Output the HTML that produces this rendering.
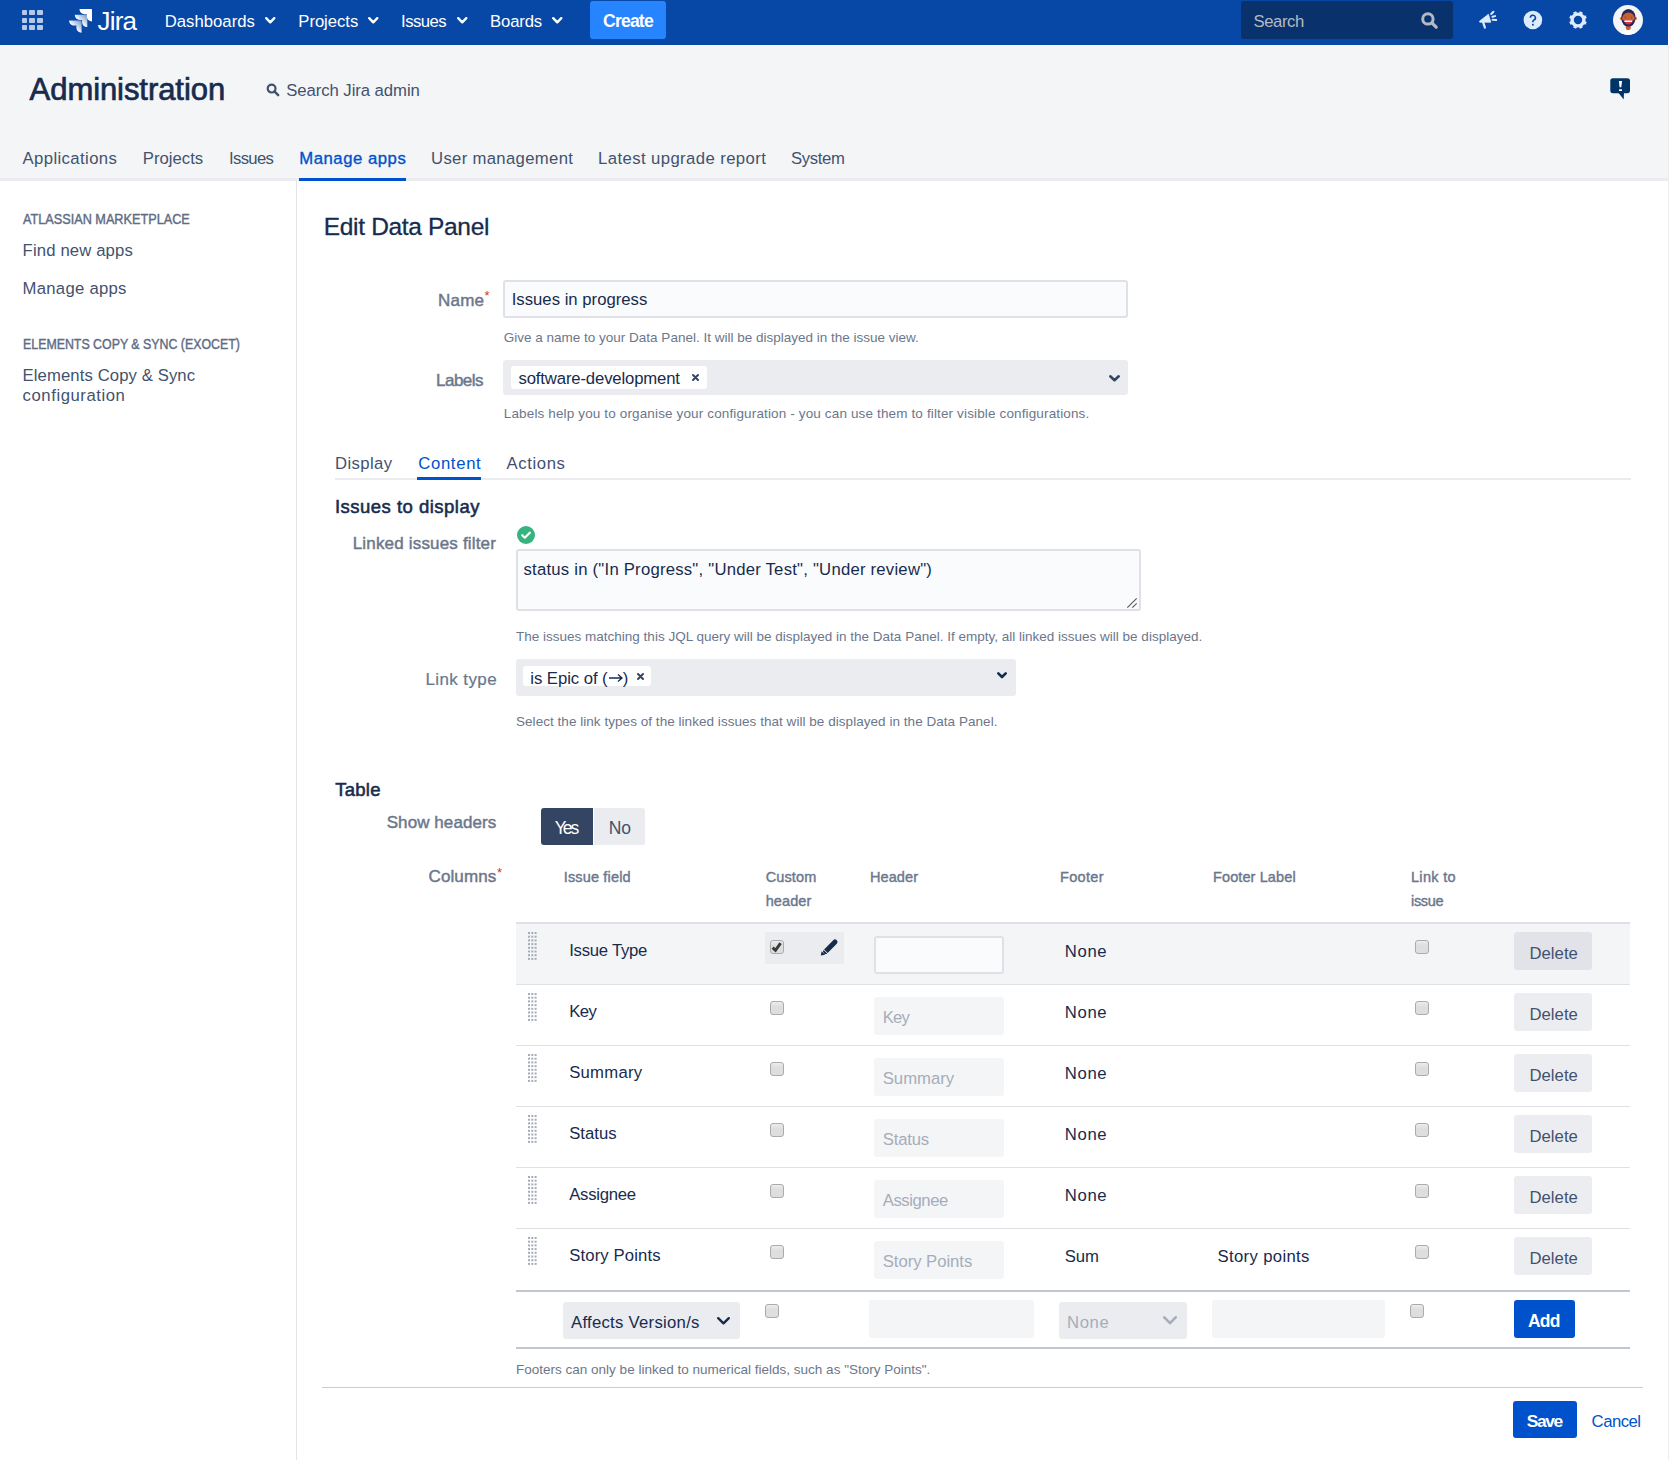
<!DOCTYPE html>
<html><head><meta charset="utf-8"><style>
html,body{margin:0;padding:0;width:1669px;height:1460px;overflow:hidden;background:#FFFFFF;}
body{position:relative;font-family:"Liberation Sans",sans-serif;}
body>div{position:absolute;}
.t{white-space:nowrap;}
svg{overflow:visible}
</style></head><body>
<div style="left:0px;top:0px;width:1668px;height:45px;background:#0747A6;"></div>
<div style="left:0px;top:45px;width:1668px;height:133px;background:#F4F5F7;"></div>
<div style="left:1668px;top:0px;width:1px;height:45px;background:#FFFFFF;"></div>
<div style="left:1668px;top:45px;width:1px;height:1415px;background:#EDEDED;"></div>
<div style="left:21.6px;top:10.0px;width:5.8px;height:5.2px;background:#B6C8EA;border-radius:1px"></div>
<div style="left:29.200000000000003px;top:10.0px;width:5.8px;height:5.2px;background:#B6C8EA;border-radius:1px"></div>
<div style="left:36.8px;top:10.0px;width:5.8px;height:5.2px;background:#B6C8EA;border-radius:1px"></div>
<div style="left:21.6px;top:17.6px;width:5.8px;height:5.2px;background:#B6C8EA;border-radius:1px"></div>
<div style="left:29.200000000000003px;top:17.6px;width:5.8px;height:5.2px;background:#B6C8EA;border-radius:1px"></div>
<div style="left:36.8px;top:17.6px;width:5.8px;height:5.2px;background:#B6C8EA;border-radius:1px"></div>
<div style="left:21.6px;top:25.2px;width:5.8px;height:5.2px;background:#B6C8EA;border-radius:1px"></div>
<div style="left:29.200000000000003px;top:25.2px;width:5.8px;height:5.2px;background:#B6C8EA;border-radius:1px"></div>
<div style="left:36.8px;top:25.2px;width:5.8px;height:5.2px;background:#B6C8EA;border-radius:1px"></div>
<svg style="position:absolute;left:66px;top:7px" width="28" height="28" viewBox="0 0 28 28">
<defs><linearGradient id="g1" x1="1" y1="0" x2="0" y2="1"><stop offset="0" stop-color="#fff" stop-opacity="0.4"/><stop offset="0.6" stop-color="#fff"/></linearGradient></defs>
<path d="M26 2H14.5c0 2.9 2.3 5.2 5.2 5.2h2.1v2c0 2.9 2.3 5.2 5.2 5.2V3c0-.6-.4-1-1-1z" fill="#fff" transform="translate(-1,0)"/>
<path d="M20.3 7.7H8.8c0 2.9 2.3 5.2 5.2 5.2h2.1v2c0 2.9 2.3 5.2 5.2 5.2V8.7c0-.6-.4-1-1-1z" fill="url(#g1)"/>
<path d="M14.6 13.4H3.1c0 2.9 2.3 5.2 5.2 5.2h2.1v2c0 2.9 2.3 5.2 5.2 5.2V14.4c0-.6-.4-1-1-1z" fill="url(#g1)"/>
</svg>
<div class="t" style="left:97.50px;top:8.00px;font-size:26px;line-height:26px;color:#FFFFFF;letter-spacing:-0.808px;">Jira</div>
<div class="t" style="left:164.70px;top:14.00px;font-size:16.7px;line-height:16.7px;color:#FFFFFF;letter-spacing:0.027px;">Dashboards</div>
<svg style="position:absolute;left:265px;top:17px" width="10.5" height="6.5" viewBox="0 0 10.5 6.5"><path d="M1.2 1.2L5.25 5.3L9.3 1.2" fill="none" stroke="#FFFFFF" stroke-width="2.4" stroke-linecap="round" stroke-linejoin="round"/></svg>
<div class="t" style="left:298.30px;top:14.00px;font-size:16.7px;line-height:16.7px;color:#FFFFFF;letter-spacing:-0.047px;">Projects</div>
<svg style="position:absolute;left:368.2px;top:17px" width="10.5" height="6.5" viewBox="0 0 10.5 6.5"><path d="M1.2 1.2L5.25 5.3L9.3 1.2" fill="none" stroke="#FFFFFF" stroke-width="2.4" stroke-linecap="round" stroke-linejoin="round"/></svg>
<div class="t" style="left:401.10px;top:14.00px;font-size:16.7px;line-height:16.7px;color:#FFFFFF;letter-spacing:-0.553px;">Issues</div>
<svg style="position:absolute;left:457.1px;top:17px" width="10.5" height="6.5" viewBox="0 0 10.5 6.5"><path d="M1.2 1.2L5.25 5.3L9.3 1.2" fill="none" stroke="#FFFFFF" stroke-width="2.4" stroke-linecap="round" stroke-linejoin="round"/></svg>
<div class="t" style="left:490.10px;top:14.00px;font-size:16.7px;line-height:16.7px;color:#FFFFFF;letter-spacing:-0.159px;">Boards</div>
<svg style="position:absolute;left:552px;top:17px" width="10.5" height="6.5" viewBox="0 0 10.5 6.5"><path d="M1.2 1.2L5.25 5.3L9.3 1.2" fill="none" stroke="#FFFFFF" stroke-width="2.4" stroke-linecap="round" stroke-linejoin="round"/></svg>
<div style="left:590px;top:1px;width:76px;height:38px;background:#2684FF;border-radius:3px"></div>
<div class="t" style="left:603.00px;top:13.00px;font-size:17.6px;line-height:17.6px;color:#FFFFFF;font-weight:700;letter-spacing:-0.816px;">Create</div>
<div style="left:1241px;top:1px;width:212px;height:38px;background:#09326C;border-radius:3px"></div>
<div class="t" style="left:1253.40px;top:14.00px;font-size:16.7px;line-height:16.7px;color:#B3BAC5;letter-spacing:-0.379px;">Search</div>
<svg style="position:absolute;left:1421px;top:12px" width="18" height="18" viewBox="0 0 18 18"><circle cx="6.9" cy="6.9" r="5.2" fill="none" stroke="#B3BAC5" stroke-width="3"/><path d="M10.8 10.8L15.2 15.2" stroke="#B3BAC5" stroke-width="3.2" stroke-linecap="round"/></svg>
<svg style="position:absolute;left:1478px;top:10px" width="20" height="20" viewBox="0 0 20 20"><path d="M1.4 11.3L10.4 4.3 12.8 12.2H1.8z" fill="#DEEBFF" stroke="#DEEBFF" stroke-width="0.8" stroke-linejoin="round"/><path d="M5.3 12.6L6.9 17.6" stroke="#DEEBFF" stroke-width="2.2" stroke-linecap="round"/><path d="M13.2 4L15.4 1.8M14.4 6.8L17.1 6.1M14.6 9.8L18.2 10.1" stroke="#DEEBFF" stroke-width="2" stroke-linecap="round"/></svg>
<svg style="position:absolute;left:1523px;top:10px" width="20" height="20" viewBox="0 0 20 20"><circle cx="9.9" cy="10" r="9.3" fill="#DEEBFF"/><path d="M7.4 7.8a2.5 2.5 0 1 1 3.4 2.3c-.6.3-.9.7-.9 1.3v.9" fill="none" stroke="#0747A6" stroke-width="1.6"/><circle cx="9.9" cy="14.8" r="1" fill="#0747A6"/></svg>
<svg style="position:absolute;left:1568px;top:10px" width="20" height="20" viewBox="0 0 20 20" fill="#DEEBFF"><path d="M8.45 1.2H11.55L11.8 4.5H8.2z" transform="rotate(22.5 10 10)"/><path d="M8.45 1.2H11.55L11.8 4.5H8.2z" transform="rotate(67.5 10 10)"/><path d="M8.45 1.2H11.55L11.8 4.5H8.2z" transform="rotate(112.5 10 10)"/><path d="M8.45 1.2H11.55L11.8 4.5H8.2z" transform="rotate(157.5 10 10)"/><path d="M8.45 1.2H11.55L11.8 4.5H8.2z" transform="rotate(202.5 10 10)"/><path d="M8.45 1.2H11.55L11.8 4.5H8.2z" transform="rotate(247.5 10 10)"/><path d="M8.45 1.2H11.55L11.8 4.5H8.2z" transform="rotate(292.5 10 10)"/><path d="M8.45 1.2H11.55L11.8 4.5H8.2z" transform="rotate(337.5 10 10)"/><circle cx="10" cy="10" r="5.9" fill="none" stroke="#DEEBFF" stroke-width="3.4"/></svg>
<svg style="position:absolute;left:1612px;top:4px" width="32" height="32" viewBox="0 0 32 32">
<defs><clipPath id="av"><circle cx="16" cy="16" r="15"/></clipPath></defs>
<circle cx="16" cy="16" r="15" fill="#F4F5F7"/>
<g clip-path="url(#av)">
<ellipse cx="16.4" cy="32" rx="9" ry="6" fill="#FFFFFF"/>
<rect x="13.8" y="20" width="5" height="6" rx="2" fill="#C8602F"/>
<circle cx="9.2" cy="14.6" r="1.3" fill="#C8602F"/>
<circle cx="23.6" cy="14.6" r="1.3" fill="#C8602F"/>
<ellipse cx="16.4" cy="13.6" rx="7.2" ry="8.6" fill="#25285A"/>
<ellipse cx="16.4" cy="15.3" rx="6.4" ry="6.9" fill="#C8602F"/>
<path d="M9.8 14.8Q10.2 22.6 16.4 22.6Q22.6 22.6 23 14.8Q22.2 17.2 16.4 17.2Q10.6 17.2 9.8 14.8z" fill="#25285A"/>
<path d="M12.3 16.6H20.4Q20 20.5 16.4 20.5Q12.8 20.5 12.3 16.6z" fill="#D6304A"/>
<path d="M12.3 16.4H20.4L20.2 18H12.5z" fill="#FFFFFF"/>
<rect x="12.6" y="12.6" width="1.2" height="1.8" rx=".5" fill="#9C4A2A"/>
<rect x="19" y="12.6" width="1.2" height="1.8" rx=".5" fill="#9C4A2A"/>
</g>
</svg>
<div class="t" style="left:29.60px;top:74.00px;font-size:31px;line-height:31px;color:#172B4D;letter-spacing:-0.068px;-webkit-text-stroke:0.7px #172B4D;">Administration</div>
<svg style="position:absolute;left:266px;top:83px" width="14" height="14" viewBox="0 0 14 14"><circle cx="5.6" cy="5.6" r="3.9" fill="none" stroke="#42526E" stroke-width="2.2"/><path d="M8.6 8.6L12.2 12.2" stroke="#42526E" stroke-width="2.4" stroke-linecap="round"/></svg>
<div class="t" style="left:286.20px;top:83.00px;font-size:16.7px;line-height:16.7px;color:#42526E;letter-spacing:-0.050px;">Search Jira admin</div>
<svg style="position:absolute;left:1609px;top:78px" width="22" height="22" viewBox="0 0 22 22"><rect x="1.3" y="0.2" width="19.7" height="15" rx="2.6" fill="#003366"/><path d="M9.2 14.5L15 14.5 14.7 21.6z" fill="#003366"/><path d="M9.8 2.9H13.1L12.3 9.2H10.6z" fill="#fff"/><rect x="10" y="11.2" width="3" height="1.9" rx=".4" fill="#fff"/></svg>
<div class="t" style="left:22.50px;top:151.00px;font-size:16.7px;line-height:16.7px;color:#42526E;letter-spacing:0.395px;">Applications</div>
<div class="t" style="left:142.80px;top:151.00px;font-size:16.7px;line-height:16.7px;color:#42526E;letter-spacing:0.010px;">Projects</div>
<div class="t" style="left:229.00px;top:151.00px;font-size:16.7px;line-height:16.7px;color:#42526E;letter-spacing:-0.653px;">Issues</div>
<div class="t" style="left:299.30px;top:151.00px;font-size:16.7px;line-height:16.7px;color:#0052CC;letter-spacing:0.530px;-webkit-text-stroke:0.35px #0052CC;">Manage apps</div>
<div class="t" style="left:431.00px;top:151.00px;font-size:16.7px;line-height:16.7px;color:#42526E;letter-spacing:0.329px;">User management</div>
<div class="t" style="left:598.00px;top:151.00px;font-size:16.7px;line-height:16.7px;color:#42526E;letter-spacing:0.415px;">Latest upgrade report</div>
<div class="t" style="left:791.00px;top:151.00px;font-size:16.7px;line-height:16.7px;color:#42526E;letter-spacing:-0.339px;">System</div>
<div style="left:0px;top:178px;width:1668px;height:3px;background:#EBECF0;"></div>
<div style="left:299px;top:178px;width:107px;height:3px;background:#0052CC;"></div>
<div style="left:296px;top:181px;width:1px;height:1279px;background:#E4E5EA;"></div>
<div class="t" style="left:22.60px;top:213.00px;font-size:13.8px;line-height:13.8px;color:#5E6C84;transform:scaleX(0.9190);transform-origin:0.00px 0;-webkit-text-stroke:0.4px #5E6C84;">ATLASSIAN MARKETPLACE</div>
<div class="t" style="left:22.60px;top:243.00px;font-size:16.7px;line-height:16.7px;color:#42526E;letter-spacing:0.139px;">Find new apps</div>
<div class="t" style="left:22.60px;top:281.00px;font-size:16.7px;line-height:16.7px;color:#42526E;letter-spacing:0.270px;">Manage apps</div>
<div class="t" style="left:22.60px;top:338.00px;font-size:13.8px;line-height:13.8px;color:#5E6C84;transform:scaleX(0.8965);transform-origin:0.00px 0;-webkit-text-stroke:0.4px #5E6C84;">ELEMENTS COPY &amp; SYNC (EXOCET)</div>
<div class="t" style="left:22.60px;top:368.00px;font-size:16.7px;line-height:16.7px;color:#42526E;letter-spacing:0.095px;">Elements Copy &amp; Sync</div>
<div class="t" style="left:22.60px;top:388.00px;font-size:16.7px;line-height:16.7px;color:#42526E;letter-spacing:0.563px;">configuration</div>
<div class="t" style="left:323.80px;top:215.00px;font-size:24.5px;line-height:24.5px;color:#172B4D;letter-spacing:-0.334px;-webkit-text-stroke:0.3px #172B4D;">Edit Data Panel</div>
<div class="t" style="left:438.00px;top:292.00px;font-size:17px;line-height:17px;color:#6B778C;letter-spacing:0.234px;-webkit-text-stroke:0.45px #6B778C;">Name</div>
<div class="t" style="left:484.5px;top:289px;font-size:13px;line-height:13px;color:#DE350B">*</div>
<div style="left:503px;top:280px;width:625px;height:38px;background:#FAFBFC;border:2px solid #DFE1E6;border-radius:3px;box-sizing:border-box"></div>
<div class="t" style="left:511.70px;top:292.00px;font-size:16.7px;line-height:16.7px;color:#172B4D;letter-spacing:0.011px;">Issues in progress</div>
<div class="t" style="left:503.80px;top:331.00px;font-size:13.5px;line-height:13.5px;color:#6B778C;letter-spacing:0.000px;">Give a name to your Data Panel. It will be displayed in the issue view.</div>
<div class="t" style="left:436.00px;top:372.00px;font-size:17px;line-height:17px;color:#6B778C;letter-spacing:-0.512px;-webkit-text-stroke:0.45px #6B778C;">Labels</div>
<div style="left:503px;top:360px;width:625px;height:35px;background:#EBECF0;border-radius:3px"></div>
<div style="left:511px;top:366px;width:196px;height:23px;background:#FFFFFF;border-radius:3px"></div>
<div class="t" style="left:518.50px;top:371.00px;font-size:16.7px;line-height:16.7px;color:#172B4D;letter-spacing:-0.141px;">software-development</div>
<svg style="position:absolute;left:691.5px;top:374.3px" width="7" height="7" viewBox="0 0 7 7"><path d="M1.0 1.0L6.0 6.0M6.0 1.0L1.0 6.0" stroke="#344563" stroke-width="2" stroke-linecap="round"/></svg>
<svg style="position:absolute;left:1109px;top:375px" width="11" height="6.5" viewBox="0 0 11 6.5"><path d="M1.3 1.3L5.5 5.2L9.7 1.3" fill="none" stroke="#344563" stroke-width="2.6" stroke-linecap="round" stroke-linejoin="round"/></svg>
<div class="t" style="left:503.80px;top:407.00px;font-size:13.5px;line-height:13.5px;color:#6B778C;letter-spacing:0.139px;">Labels help you to organise your configuration - you can use them to filter visible configurations.</div>
<div class="t" style="left:335.10px;top:456.00px;font-size:16.7px;line-height:16.7px;color:#42526E;letter-spacing:0.371px;">Display</div>
<div class="t" style="left:418.20px;top:456.00px;font-size:16.7px;line-height:16.7px;color:#0052CC;letter-spacing:0.685px;">Content</div>
<div class="t" style="left:506.50px;top:456.00px;font-size:16.7px;line-height:16.7px;color:#42526E;letter-spacing:0.621px;">Actions</div>
<div style="left:335px;top:478px;width:1296px;height:2px;background:#EBECF0;"></div>
<div style="left:417px;top:477px;width:64px;height:3px;background:#0052CC;"></div>
<div class="t" style="left:335.00px;top:498.00px;font-size:18.5px;line-height:18.5px;color:#172B4D;letter-spacing:0.481px;-webkit-text-stroke:0.55px #172B4D;">Issues to display</div>
<div class="t" style="left:352.70px;top:535.00px;font-size:17px;line-height:17px;color:#6B778C;letter-spacing:0.178px;-webkit-text-stroke:0.45px #6B778C;">Linked issues filter</div>
<svg style="position:absolute;left:517px;top:526px" width="18" height="18" viewBox="0 0 18 18"><circle cx="9" cy="9" r="9" fill="#36B37E"/><path d="M5.2 9.2l2.6 2.5 5-5" fill="none" stroke="#fff" stroke-width="2.2" stroke-linecap="round" stroke-linejoin="round"/></svg>
<div style="left:516px;top:549px;width:625px;height:62px;background:#FAFBFC;border:2px solid #DFE1E6;border-radius:3px;box-sizing:border-box"></div>
<svg style="position:absolute;left:1124px;top:594px" width="16" height="16" viewBox="0 0 16 16"><path d="M3.3 13.7L12.7 4.3M8.3 13.7L12.7 9.3" stroke="#555" stroke-width="1.05"/></svg>
<div class="t" style="left:523.50px;top:562.00px;font-size:16.7px;line-height:16.7px;color:#172B4D;letter-spacing:0.229px;">status in (&quot;In Progress&quot;, &quot;Under Test&quot;, &quot;Under review&quot;)</div>
<div class="t" style="left:516.00px;top:630.00px;font-size:13.5px;line-height:13.5px;color:#6B778C;letter-spacing:0.003px;">The issues matching this JQL query will be displayed in the Data Panel. If empty, all linked issues will be displayed.</div>
<div class="t" style="left:425.50px;top:671.00px;font-size:17px;line-height:17px;color:#6B778C;letter-spacing:0.382px;-webkit-text-stroke:0.2px #6B778C;">Link type</div>
<div style="left:516px;top:659px;width:500px;height:37px;background:#EBECF0;border-radius:3px"></div>
<div style="left:523px;top:666px;width:128px;height:20px;background:#FFFFFF;border-radius:3px"></div>
<div class="t" style="left:530.30px;top:671.00px;font-size:16.7px;line-height:16.7px;color:#172B4D;letter-spacing:-0.050px;">is Epic of (</div>
<svg style="position:absolute;left:608px;top:673px" width="16" height="10" viewBox="0 0 16 10"><path d="M1 5H14M10 1.5L14 5 10 8.5" fill="none" stroke="#172B4D" stroke-width="1.3"/></svg>
<div class="t" style="left:622.80px;top:671.00px;font-size:16.7px;line-height:16.7px;color:#172B4D;">)</div>
<svg style="position:absolute;left:636.8px;top:672.5px" width="7" height="7" viewBox="0 0 7 7"><path d="M1.0 1.0L6.0 6.0M6.0 1.0L1.0 6.0" stroke="#344563" stroke-width="2" stroke-linecap="round"/></svg>
<svg style="position:absolute;left:997.4px;top:672.4px" width="10" height="6.3" viewBox="0 0 10 6.3"><path d="M1.3 1.3L5.0 5.0L8.7 1.3" fill="none" stroke="#172B4D" stroke-width="2.6" stroke-linecap="round" stroke-linejoin="round"/></svg>
<div class="t" style="left:516.00px;top:715.00px;font-size:13.5px;line-height:13.5px;color:#6B778C;letter-spacing:0.041px;">Select the link types of the linked issues that will be displayed in the Data Panel.</div>
<div class="t" style="left:335.20px;top:781.00px;font-size:18.5px;line-height:18.5px;color:#172B4D;letter-spacing:0.259px;-webkit-text-stroke:0.55px #172B4D;">Table</div>
<div class="t" style="left:386.70px;top:814.00px;font-size:17px;line-height:17px;color:#6B778C;letter-spacing:0.080px;-webkit-text-stroke:0.45px #6B778C;">Show headers</div>
<div style="left:541px;top:808px;width:104px;height:37px;background:#EBECF0;border-radius:3px"></div>
<div style="left:541px;top:808px;width:52px;height:37px;background:#344563;border-radius:3px 0 0 3px"></div>
<div style="left:593px;top:808px;width:1px;height:37px;background:#FFFFFF;"></div>
<div class="t" style="left:554.80px;top:820.00px;font-size:17.5px;line-height:17.5px;color:#FFFFFF;letter-spacing:-2.084px;">Yes</div>
<div class="t" style="left:608.80px;top:820.00px;font-size:17.5px;line-height:17.5px;color:#42526E;letter-spacing:-0.156px;">No</div>
<div class="t" style="left:428.50px;top:868.00px;font-size:17px;line-height:17px;color:#6B778C;letter-spacing:0.114px;-webkit-text-stroke:0.45px #6B778C;">Columns</div>
<div class="t" style="left:497px;top:866px;font-size:13px;line-height:13px;color:#DE350B">*</div>
<div class="t" style="left:563.70px;top:870.00px;font-size:14.5px;line-height:14.5px;color:#6B778C;letter-spacing:0.161px;-webkit-text-stroke:0.4px #6B778C;">Issue field</div>
<div class="t" style="left:765.70px;top:870.00px;font-size:14.5px;line-height:14.5px;color:#6B778C;letter-spacing:0.130px;-webkit-text-stroke:0.4px #6B778C;">Custom</div>
<div class="t" style="left:765.70px;top:894.00px;font-size:14.5px;line-height:14.5px;color:#6B778C;letter-spacing:0.087px;-webkit-text-stroke:0.4px #6B778C;">header</div>
<div class="t" style="left:870.00px;top:870.00px;font-size:14.5px;line-height:14.5px;color:#6B778C;letter-spacing:0.088px;-webkit-text-stroke:0.4px #6B778C;">Header</div>
<div class="t" style="left:1060.00px;top:870.00px;font-size:14.5px;line-height:14.5px;color:#6B778C;letter-spacing:0.339px;-webkit-text-stroke:0.4px #6B778C;">Footer</div>
<div class="t" style="left:1213.00px;top:870.00px;font-size:14.5px;line-height:14.5px;color:#6B778C;letter-spacing:0.108px;-webkit-text-stroke:0.4px #6B778C;">Footer Label</div>
<div class="t" style="left:1411.00px;top:870.00px;font-size:14.5px;line-height:14.5px;color:#6B778C;letter-spacing:0.310px;-webkit-text-stroke:0.4px #6B778C;">Link to</div>
<div class="t" style="left:1411.00px;top:894.00px;font-size:14.5px;line-height:14.5px;color:#6B778C;letter-spacing:-0.314px;-webkit-text-stroke:0.4px #6B778C;">issue</div>
<div style="left:516px;top:922px;width:1114px;height:2px;background:#DFE1E6;"></div>
<div style="left:516px;top:924px;width:1114px;height:60px;background:#F4F5F7;"></div>
<svg style="position:absolute;left:528px;top:932px" width="10" height="30" viewBox="0 0 10 30"><rect x="0.0" y="0.0" width="2" height="2" fill="#A5ADBA"/><rect x="3.3" y="0.0" width="2" height="2" fill="#A5ADBA"/><rect x="6.6" y="0.0" width="2" height="2" fill="#A5ADBA"/><rect x="0.0" y="3.7" width="2" height="2" fill="#A5ADBA"/><rect x="3.3" y="3.7" width="2" height="2" fill="#A5ADBA"/><rect x="6.6" y="3.7" width="2" height="2" fill="#A5ADBA"/><rect x="0.0" y="7.4" width="2" height="2" fill="#A5ADBA"/><rect x="3.3" y="7.4" width="2" height="2" fill="#A5ADBA"/><rect x="6.6" y="7.4" width="2" height="2" fill="#A5ADBA"/><rect x="0.0" y="11.100000000000001" width="2" height="2" fill="#A5ADBA"/><rect x="3.3" y="11.100000000000001" width="2" height="2" fill="#A5ADBA"/><rect x="6.6" y="11.100000000000001" width="2" height="2" fill="#A5ADBA"/><rect x="0.0" y="14.8" width="2" height="2" fill="#A5ADBA"/><rect x="3.3" y="14.8" width="2" height="2" fill="#A5ADBA"/><rect x="6.6" y="14.8" width="2" height="2" fill="#A5ADBA"/><rect x="0.0" y="18.5" width="2" height="2" fill="#A5ADBA"/><rect x="3.3" y="18.5" width="2" height="2" fill="#A5ADBA"/><rect x="6.6" y="18.5" width="2" height="2" fill="#A5ADBA"/><rect x="0.0" y="22.200000000000003" width="2" height="2" fill="#A5ADBA"/><rect x="3.3" y="22.200000000000003" width="2" height="2" fill="#A5ADBA"/><rect x="6.6" y="22.200000000000003" width="2" height="2" fill="#A5ADBA"/><rect x="0.0" y="25.900000000000002" width="2" height="2" fill="#A5ADBA"/><rect x="3.3" y="25.900000000000002" width="2" height="2" fill="#A5ADBA"/><rect x="6.6" y="25.900000000000002" width="2" height="2" fill="#A5ADBA"/></svg>
<div class="t" style="left:569.20px;top:943.00px;font-size:16.7px;line-height:16.7px;color:#172B4D;letter-spacing:-0.250px;">Issue Type</div>
<div style="left:765px;top:932px;width:79px;height:32px;background:#EBECF0;"></div>
<svg style="position:absolute;left:770px;top:940px" width="14" height="14" viewBox="0 0 14 14"><defs><linearGradient id="cbg" x1="0" y1="0" x2="0" y2="1"><stop offset="0" stop-color="#EEEEEE"/><stop offset="0.4" stop-color="#DEDEDE"/></linearGradient></defs><rect x="0.5" y="0.5" width="13" height="13" rx="2.5" fill="url(#cbg)" stroke="#ABABAB"/><path d="M2.6 7.6L5.5 10.4 10.6 3.2" fill="none" stroke="#3A3A3A" stroke-width="2.9" stroke-linejoin="miter"/></svg>
<svg style="position:absolute;left:820px;top:939px" width="18" height="18" viewBox="0 0 18 18"><path d="M5.6 12.4L15 3" stroke="#172B4D" stroke-width="5" stroke-linecap="round"/><path d="M2.6 9.4l6 6" stroke="#EBECF0" stroke-width="1"/><path d="M0.8 16.6L1.6 12.2 5.2 15.8z" fill="#172B4D"/></svg>
<div style="left:874px;top:936px;width:130px;height:38px;background:#FAFBFC;border:2px solid #DFE1E6;border-radius:3px;box-sizing:border-box"></div>
<div class="t" style="left:1064.80px;top:944.00px;font-size:16.7px;line-height:16.7px;color:#172B4D;letter-spacing:0.629px;">None</div>
<svg style="position:absolute;left:1415px;top:940px" width="14" height="14" viewBox="0 0 14 14"><defs><linearGradient id="cbg" x1="0" y1="0" x2="0" y2="1"><stop offset="0" stop-color="#EEEEEE"/><stop offset="0.4" stop-color="#DEDEDE"/></linearGradient></defs><rect x="0.5" y="0.5" width="13" height="13" rx="2.5" fill="url(#cbg)" stroke="#ABABAB"/></svg>
<div style="left:1514px;top:932px;width:78px;height:38px;background:rgba(9,30,66,0.08);border-radius:3px"></div>
<div class="t" style="left:1529.40px;top:946.00px;font-size:16.7px;line-height:16.7px;color:#42526E;letter-spacing:0.047px;">Delete</div>
<div style="left:516px;top:984px;width:1114px;height:1px;background:#DFE1E6;"></div>
<svg style="position:absolute;left:528px;top:993px" width="10" height="30" viewBox="0 0 10 30"><rect x="0.0" y="0.0" width="2" height="2" fill="#A5ADBA"/><rect x="3.3" y="0.0" width="2" height="2" fill="#A5ADBA"/><rect x="6.6" y="0.0" width="2" height="2" fill="#A5ADBA"/><rect x="0.0" y="3.7" width="2" height="2" fill="#A5ADBA"/><rect x="3.3" y="3.7" width="2" height="2" fill="#A5ADBA"/><rect x="6.6" y="3.7" width="2" height="2" fill="#A5ADBA"/><rect x="0.0" y="7.4" width="2" height="2" fill="#A5ADBA"/><rect x="3.3" y="7.4" width="2" height="2" fill="#A5ADBA"/><rect x="6.6" y="7.4" width="2" height="2" fill="#A5ADBA"/><rect x="0.0" y="11.100000000000001" width="2" height="2" fill="#A5ADBA"/><rect x="3.3" y="11.100000000000001" width="2" height="2" fill="#A5ADBA"/><rect x="6.6" y="11.100000000000001" width="2" height="2" fill="#A5ADBA"/><rect x="0.0" y="14.8" width="2" height="2" fill="#A5ADBA"/><rect x="3.3" y="14.8" width="2" height="2" fill="#A5ADBA"/><rect x="6.6" y="14.8" width="2" height="2" fill="#A5ADBA"/><rect x="0.0" y="18.5" width="2" height="2" fill="#A5ADBA"/><rect x="3.3" y="18.5" width="2" height="2" fill="#A5ADBA"/><rect x="6.6" y="18.5" width="2" height="2" fill="#A5ADBA"/><rect x="0.0" y="22.200000000000003" width="2" height="2" fill="#A5ADBA"/><rect x="3.3" y="22.200000000000003" width="2" height="2" fill="#A5ADBA"/><rect x="6.6" y="22.200000000000003" width="2" height="2" fill="#A5ADBA"/><rect x="0.0" y="25.900000000000002" width="2" height="2" fill="#A5ADBA"/><rect x="3.3" y="25.900000000000002" width="2" height="2" fill="#A5ADBA"/><rect x="6.6" y="25.900000000000002" width="2" height="2" fill="#A5ADBA"/></svg>
<div class="t" style="left:569.20px;top:1004.00px;font-size:16.7px;line-height:16.7px;color:#172B4D;letter-spacing:-0.583px;">Key</div>
<svg style="position:absolute;left:770px;top:1001px" width="14" height="14" viewBox="0 0 14 14"><defs><linearGradient id="cbg" x1="0" y1="0" x2="0" y2="1"><stop offset="0" stop-color="#EEEEEE"/><stop offset="0.4" stop-color="#DEDEDE"/></linearGradient></defs><rect x="0.5" y="0.5" width="13" height="13" rx="2.5" fill="url(#cbg)" stroke="#ABABAB"/></svg>
<div style="left:874px;top:997px;width:130px;height:38px;background:#F4F5F7;border-radius:3px"></div>
<div class="t" style="left:882.70px;top:1010.00px;font-size:16.7px;line-height:16.7px;color:#A5ADBA;letter-spacing:-0.859px;">Key</div>
<div class="t" style="left:1064.80px;top:1005.00px;font-size:16.7px;line-height:16.7px;color:#172B4D;letter-spacing:0.629px;">None</div>
<svg style="position:absolute;left:1415px;top:1001px" width="14" height="14" viewBox="0 0 14 14"><defs><linearGradient id="cbg" x1="0" y1="0" x2="0" y2="1"><stop offset="0" stop-color="#EEEEEE"/><stop offset="0.4" stop-color="#DEDEDE"/></linearGradient></defs><rect x="0.5" y="0.5" width="13" height="13" rx="2.5" fill="url(#cbg)" stroke="#ABABAB"/></svg>
<div style="left:1514px;top:993px;width:78px;height:38px;background:rgba(9,30,66,0.08);border-radius:3px"></div>
<div class="t" style="left:1529.40px;top:1007.00px;font-size:16.7px;line-height:16.7px;color:#42526E;letter-spacing:0.047px;">Delete</div>
<div style="left:516px;top:1045px;width:1114px;height:1px;background:#DFE1E6;"></div>
<svg style="position:absolute;left:528px;top:1054px" width="10" height="30" viewBox="0 0 10 30"><rect x="0.0" y="0.0" width="2" height="2" fill="#A5ADBA"/><rect x="3.3" y="0.0" width="2" height="2" fill="#A5ADBA"/><rect x="6.6" y="0.0" width="2" height="2" fill="#A5ADBA"/><rect x="0.0" y="3.7" width="2" height="2" fill="#A5ADBA"/><rect x="3.3" y="3.7" width="2" height="2" fill="#A5ADBA"/><rect x="6.6" y="3.7" width="2" height="2" fill="#A5ADBA"/><rect x="0.0" y="7.4" width="2" height="2" fill="#A5ADBA"/><rect x="3.3" y="7.4" width="2" height="2" fill="#A5ADBA"/><rect x="6.6" y="7.4" width="2" height="2" fill="#A5ADBA"/><rect x="0.0" y="11.100000000000001" width="2" height="2" fill="#A5ADBA"/><rect x="3.3" y="11.100000000000001" width="2" height="2" fill="#A5ADBA"/><rect x="6.6" y="11.100000000000001" width="2" height="2" fill="#A5ADBA"/><rect x="0.0" y="14.8" width="2" height="2" fill="#A5ADBA"/><rect x="3.3" y="14.8" width="2" height="2" fill="#A5ADBA"/><rect x="6.6" y="14.8" width="2" height="2" fill="#A5ADBA"/><rect x="0.0" y="18.5" width="2" height="2" fill="#A5ADBA"/><rect x="3.3" y="18.5" width="2" height="2" fill="#A5ADBA"/><rect x="6.6" y="18.5" width="2" height="2" fill="#A5ADBA"/><rect x="0.0" y="22.200000000000003" width="2" height="2" fill="#A5ADBA"/><rect x="3.3" y="22.200000000000003" width="2" height="2" fill="#A5ADBA"/><rect x="6.6" y="22.200000000000003" width="2" height="2" fill="#A5ADBA"/><rect x="0.0" y="25.900000000000002" width="2" height="2" fill="#A5ADBA"/><rect x="3.3" y="25.900000000000002" width="2" height="2" fill="#A5ADBA"/><rect x="6.6" y="25.900000000000002" width="2" height="2" fill="#A5ADBA"/></svg>
<div class="t" style="left:569.20px;top:1065.00px;font-size:16.7px;line-height:16.7px;color:#172B4D;letter-spacing:0.261px;">Summary</div>
<svg style="position:absolute;left:770px;top:1062px" width="14" height="14" viewBox="0 0 14 14"><defs><linearGradient id="cbg" x1="0" y1="0" x2="0" y2="1"><stop offset="0" stop-color="#EEEEEE"/><stop offset="0.4" stop-color="#DEDEDE"/></linearGradient></defs><rect x="0.5" y="0.5" width="13" height="13" rx="2.5" fill="url(#cbg)" stroke="#ABABAB"/></svg>
<div style="left:874px;top:1058px;width:130px;height:38px;background:#F4F5F7;border-radius:3px"></div>
<div class="t" style="left:882.70px;top:1071.00px;font-size:16.7px;line-height:16.7px;color:#A5ADBA;letter-spacing:0.018px;">Summary</div>
<div class="t" style="left:1064.80px;top:1066.00px;font-size:16.7px;line-height:16.7px;color:#172B4D;letter-spacing:0.629px;">None</div>
<svg style="position:absolute;left:1415px;top:1062px" width="14" height="14" viewBox="0 0 14 14"><defs><linearGradient id="cbg" x1="0" y1="0" x2="0" y2="1"><stop offset="0" stop-color="#EEEEEE"/><stop offset="0.4" stop-color="#DEDEDE"/></linearGradient></defs><rect x="0.5" y="0.5" width="13" height="13" rx="2.5" fill="url(#cbg)" stroke="#ABABAB"/></svg>
<div style="left:1514px;top:1054px;width:78px;height:38px;background:rgba(9,30,66,0.08);border-radius:3px"></div>
<div class="t" style="left:1529.40px;top:1068.00px;font-size:16.7px;line-height:16.7px;color:#42526E;letter-spacing:0.047px;">Delete</div>
<div style="left:516px;top:1106px;width:1114px;height:1px;background:#DFE1E6;"></div>
<svg style="position:absolute;left:528px;top:1115px" width="10" height="30" viewBox="0 0 10 30"><rect x="0.0" y="0.0" width="2" height="2" fill="#A5ADBA"/><rect x="3.3" y="0.0" width="2" height="2" fill="#A5ADBA"/><rect x="6.6" y="0.0" width="2" height="2" fill="#A5ADBA"/><rect x="0.0" y="3.7" width="2" height="2" fill="#A5ADBA"/><rect x="3.3" y="3.7" width="2" height="2" fill="#A5ADBA"/><rect x="6.6" y="3.7" width="2" height="2" fill="#A5ADBA"/><rect x="0.0" y="7.4" width="2" height="2" fill="#A5ADBA"/><rect x="3.3" y="7.4" width="2" height="2" fill="#A5ADBA"/><rect x="6.6" y="7.4" width="2" height="2" fill="#A5ADBA"/><rect x="0.0" y="11.100000000000001" width="2" height="2" fill="#A5ADBA"/><rect x="3.3" y="11.100000000000001" width="2" height="2" fill="#A5ADBA"/><rect x="6.6" y="11.100000000000001" width="2" height="2" fill="#A5ADBA"/><rect x="0.0" y="14.8" width="2" height="2" fill="#A5ADBA"/><rect x="3.3" y="14.8" width="2" height="2" fill="#A5ADBA"/><rect x="6.6" y="14.8" width="2" height="2" fill="#A5ADBA"/><rect x="0.0" y="18.5" width="2" height="2" fill="#A5ADBA"/><rect x="3.3" y="18.5" width="2" height="2" fill="#A5ADBA"/><rect x="6.6" y="18.5" width="2" height="2" fill="#A5ADBA"/><rect x="0.0" y="22.200000000000003" width="2" height="2" fill="#A5ADBA"/><rect x="3.3" y="22.200000000000003" width="2" height="2" fill="#A5ADBA"/><rect x="6.6" y="22.200000000000003" width="2" height="2" fill="#A5ADBA"/><rect x="0.0" y="25.900000000000002" width="2" height="2" fill="#A5ADBA"/><rect x="3.3" y="25.900000000000002" width="2" height="2" fill="#A5ADBA"/><rect x="6.6" y="25.900000000000002" width="2" height="2" fill="#A5ADBA"/></svg>
<div class="t" style="left:569.20px;top:1126.00px;font-size:16.7px;line-height:16.7px;color:#172B4D;letter-spacing:0.031px;">Status</div>
<svg style="position:absolute;left:770px;top:1123px" width="14" height="14" viewBox="0 0 14 14"><defs><linearGradient id="cbg" x1="0" y1="0" x2="0" y2="1"><stop offset="0" stop-color="#EEEEEE"/><stop offset="0.4" stop-color="#DEDEDE"/></linearGradient></defs><rect x="0.5" y="0.5" width="13" height="13" rx="2.5" fill="url(#cbg)" stroke="#ABABAB"/></svg>
<div style="left:874px;top:1119px;width:130px;height:38px;background:#F4F5F7;border-radius:3px"></div>
<div class="t" style="left:882.70px;top:1132.00px;font-size:16.7px;line-height:16.7px;color:#A5ADBA;letter-spacing:-0.159px;">Status</div>
<div class="t" style="left:1064.80px;top:1127.00px;font-size:16.7px;line-height:16.7px;color:#172B4D;letter-spacing:0.629px;">None</div>
<svg style="position:absolute;left:1415px;top:1123px" width="14" height="14" viewBox="0 0 14 14"><defs><linearGradient id="cbg" x1="0" y1="0" x2="0" y2="1"><stop offset="0" stop-color="#EEEEEE"/><stop offset="0.4" stop-color="#DEDEDE"/></linearGradient></defs><rect x="0.5" y="0.5" width="13" height="13" rx="2.5" fill="url(#cbg)" stroke="#ABABAB"/></svg>
<div style="left:1514px;top:1115px;width:78px;height:38px;background:rgba(9,30,66,0.08);border-radius:3px"></div>
<div class="t" style="left:1529.40px;top:1129.00px;font-size:16.7px;line-height:16.7px;color:#42526E;letter-spacing:0.047px;">Delete</div>
<div style="left:516px;top:1167px;width:1114px;height:1px;background:#DFE1E6;"></div>
<svg style="position:absolute;left:528px;top:1176px" width="10" height="30" viewBox="0 0 10 30"><rect x="0.0" y="0.0" width="2" height="2" fill="#A5ADBA"/><rect x="3.3" y="0.0" width="2" height="2" fill="#A5ADBA"/><rect x="6.6" y="0.0" width="2" height="2" fill="#A5ADBA"/><rect x="0.0" y="3.7" width="2" height="2" fill="#A5ADBA"/><rect x="3.3" y="3.7" width="2" height="2" fill="#A5ADBA"/><rect x="6.6" y="3.7" width="2" height="2" fill="#A5ADBA"/><rect x="0.0" y="7.4" width="2" height="2" fill="#A5ADBA"/><rect x="3.3" y="7.4" width="2" height="2" fill="#A5ADBA"/><rect x="6.6" y="7.4" width="2" height="2" fill="#A5ADBA"/><rect x="0.0" y="11.100000000000001" width="2" height="2" fill="#A5ADBA"/><rect x="3.3" y="11.100000000000001" width="2" height="2" fill="#A5ADBA"/><rect x="6.6" y="11.100000000000001" width="2" height="2" fill="#A5ADBA"/><rect x="0.0" y="14.8" width="2" height="2" fill="#A5ADBA"/><rect x="3.3" y="14.8" width="2" height="2" fill="#A5ADBA"/><rect x="6.6" y="14.8" width="2" height="2" fill="#A5ADBA"/><rect x="0.0" y="18.5" width="2" height="2" fill="#A5ADBA"/><rect x="3.3" y="18.5" width="2" height="2" fill="#A5ADBA"/><rect x="6.6" y="18.5" width="2" height="2" fill="#A5ADBA"/><rect x="0.0" y="22.200000000000003" width="2" height="2" fill="#A5ADBA"/><rect x="3.3" y="22.200000000000003" width="2" height="2" fill="#A5ADBA"/><rect x="6.6" y="22.200000000000003" width="2" height="2" fill="#A5ADBA"/><rect x="0.0" y="25.900000000000002" width="2" height="2" fill="#A5ADBA"/><rect x="3.3" y="25.900000000000002" width="2" height="2" fill="#A5ADBA"/><rect x="6.6" y="25.900000000000002" width="2" height="2" fill="#A5ADBA"/></svg>
<div class="t" style="left:569.20px;top:1187.00px;font-size:16.7px;line-height:16.7px;color:#172B4D;letter-spacing:-0.246px;">Assignee</div>
<svg style="position:absolute;left:770px;top:1184px" width="14" height="14" viewBox="0 0 14 14"><defs><linearGradient id="cbg" x1="0" y1="0" x2="0" y2="1"><stop offset="0" stop-color="#EEEEEE"/><stop offset="0.4" stop-color="#DEDEDE"/></linearGradient></defs><rect x="0.5" y="0.5" width="13" height="13" rx="2.5" fill="url(#cbg)" stroke="#ABABAB"/></svg>
<div style="left:874px;top:1180px;width:130px;height:38px;background:#F4F5F7;border-radius:3px"></div>
<div class="t" style="left:882.70px;top:1193.00px;font-size:16.7px;line-height:16.7px;color:#A5ADBA;letter-spacing:-0.437px;">Assignee</div>
<div class="t" style="left:1064.80px;top:1188.00px;font-size:16.7px;line-height:16.7px;color:#172B4D;letter-spacing:0.629px;">None</div>
<svg style="position:absolute;left:1415px;top:1184px" width="14" height="14" viewBox="0 0 14 14"><defs><linearGradient id="cbg" x1="0" y1="0" x2="0" y2="1"><stop offset="0" stop-color="#EEEEEE"/><stop offset="0.4" stop-color="#DEDEDE"/></linearGradient></defs><rect x="0.5" y="0.5" width="13" height="13" rx="2.5" fill="url(#cbg)" stroke="#ABABAB"/></svg>
<div style="left:1514px;top:1176px;width:78px;height:38px;background:rgba(9,30,66,0.08);border-radius:3px"></div>
<div class="t" style="left:1529.40px;top:1190.00px;font-size:16.7px;line-height:16.7px;color:#42526E;letter-spacing:0.047px;">Delete</div>
<div style="left:516px;top:1228px;width:1114px;height:1px;background:#DFE1E6;"></div>
<svg style="position:absolute;left:528px;top:1237px" width="10" height="30" viewBox="0 0 10 30"><rect x="0.0" y="0.0" width="2" height="2" fill="#A5ADBA"/><rect x="3.3" y="0.0" width="2" height="2" fill="#A5ADBA"/><rect x="6.6" y="0.0" width="2" height="2" fill="#A5ADBA"/><rect x="0.0" y="3.7" width="2" height="2" fill="#A5ADBA"/><rect x="3.3" y="3.7" width="2" height="2" fill="#A5ADBA"/><rect x="6.6" y="3.7" width="2" height="2" fill="#A5ADBA"/><rect x="0.0" y="7.4" width="2" height="2" fill="#A5ADBA"/><rect x="3.3" y="7.4" width="2" height="2" fill="#A5ADBA"/><rect x="6.6" y="7.4" width="2" height="2" fill="#A5ADBA"/><rect x="0.0" y="11.100000000000001" width="2" height="2" fill="#A5ADBA"/><rect x="3.3" y="11.100000000000001" width="2" height="2" fill="#A5ADBA"/><rect x="6.6" y="11.100000000000001" width="2" height="2" fill="#A5ADBA"/><rect x="0.0" y="14.8" width="2" height="2" fill="#A5ADBA"/><rect x="3.3" y="14.8" width="2" height="2" fill="#A5ADBA"/><rect x="6.6" y="14.8" width="2" height="2" fill="#A5ADBA"/><rect x="0.0" y="18.5" width="2" height="2" fill="#A5ADBA"/><rect x="3.3" y="18.5" width="2" height="2" fill="#A5ADBA"/><rect x="6.6" y="18.5" width="2" height="2" fill="#A5ADBA"/><rect x="0.0" y="22.200000000000003" width="2" height="2" fill="#A5ADBA"/><rect x="3.3" y="22.200000000000003" width="2" height="2" fill="#A5ADBA"/><rect x="6.6" y="22.200000000000003" width="2" height="2" fill="#A5ADBA"/><rect x="0.0" y="25.900000000000002" width="2" height="2" fill="#A5ADBA"/><rect x="3.3" y="25.900000000000002" width="2" height="2" fill="#A5ADBA"/><rect x="6.6" y="25.900000000000002" width="2" height="2" fill="#A5ADBA"/></svg>
<div class="t" style="left:569.20px;top:1248.00px;font-size:16.7px;line-height:16.7px;color:#172B4D;letter-spacing:0.131px;">Story Points</div>
<svg style="position:absolute;left:770px;top:1245px" width="14" height="14" viewBox="0 0 14 14"><defs><linearGradient id="cbg" x1="0" y1="0" x2="0" y2="1"><stop offset="0" stop-color="#EEEEEE"/><stop offset="0.4" stop-color="#DEDEDE"/></linearGradient></defs><rect x="0.5" y="0.5" width="13" height="13" rx="2.5" fill="url(#cbg)" stroke="#ABABAB"/></svg>
<div style="left:874px;top:1241px;width:130px;height:38px;background:#F4F5F7;border-radius:3px"></div>
<div class="t" style="left:882.70px;top:1254.00px;font-size:16.7px;line-height:16.7px;color:#A5ADBA;letter-spacing:-0.035px;">Story Points</div>
<div class="t" style="left:1064.80px;top:1249.00px;font-size:16.7px;line-height:16.7px;color:#172B4D;letter-spacing:-0.159px;">Sum</div>
<div class="t" style="left:1217.50px;top:1249.00px;font-size:16.7px;line-height:16.7px;color:#172B4D;letter-spacing:0.348px;">Story points</div>
<svg style="position:absolute;left:1415px;top:1245px" width="14" height="14" viewBox="0 0 14 14"><defs><linearGradient id="cbg" x1="0" y1="0" x2="0" y2="1"><stop offset="0" stop-color="#EEEEEE"/><stop offset="0.4" stop-color="#DEDEDE"/></linearGradient></defs><rect x="0.5" y="0.5" width="13" height="13" rx="2.5" fill="url(#cbg)" stroke="#ABABAB"/></svg>
<div style="left:1514px;top:1237px;width:78px;height:38px;background:rgba(9,30,66,0.08);border-radius:3px"></div>
<div class="t" style="left:1529.40px;top:1251.00px;font-size:16.7px;line-height:16.7px;color:#42526E;letter-spacing:0.047px;">Delete</div>
<div style="left:516px;top:1290px;width:1114px;height:2px;background:#C1C7D0;"></div>
<div style="left:563px;top:1302px;width:177px;height:37px;background:#EBECF0;border-radius:3px"></div>
<div class="t" style="left:571.00px;top:1315.00px;font-size:16.7px;line-height:16.7px;color:#172B4D;letter-spacing:0.276px;">Affects Version/s</div>
<svg style="position:absolute;left:716.5px;top:1316.5px" width="13" height="7.5" viewBox="0 0 13 7.5"><path d="M1.2 1.2L6.5 6.3L11.8 1.2" fill="none" stroke="#172B4D" stroke-width="2.4" stroke-linecap="round" stroke-linejoin="round"/></svg>
<svg style="position:absolute;left:765px;top:1304px" width="14" height="14" viewBox="0 0 14 14"><defs><linearGradient id="cbg" x1="0" y1="0" x2="0" y2="1"><stop offset="0" stop-color="#EEEEEE"/><stop offset="0.4" stop-color="#DEDEDE"/></linearGradient></defs><rect x="0.5" y="0.5" width="13" height="13" rx="2.5" fill="url(#cbg)" stroke="#ABABAB"/></svg>
<div style="left:869px;top:1300px;width:165px;height:38px;background:#F4F5F7;border-radius:3px"></div>
<div style="left:1059px;top:1302px;width:128px;height:37px;background:#EBECF0;border-radius:3px"></div>
<div class="t" style="left:1067.00px;top:1315.00px;font-size:16.7px;line-height:16.7px;color:#A5ADBA;letter-spacing:0.629px;">None</div>
<svg style="position:absolute;left:1163px;top:1316px" width="14" height="8.5" viewBox="0 0 14 8.5"><path d="M1.3 1.3L7.0 7.2L12.7 1.3" fill="none" stroke="#A5ADBA" stroke-width="2.6" stroke-linecap="round" stroke-linejoin="round"/></svg>
<div style="left:1212px;top:1300px;width:173px;height:38px;background:#F4F5F7;border-radius:3px"></div>
<svg style="position:absolute;left:1410px;top:1304px" width="14" height="14" viewBox="0 0 14 14"><defs><linearGradient id="cbg" x1="0" y1="0" x2="0" y2="1"><stop offset="0" stop-color="#EEEEEE"/><stop offset="0.4" stop-color="#DEDEDE"/></linearGradient></defs><rect x="0.5" y="0.5" width="13" height="13" rx="2.5" fill="url(#cbg)" stroke="#ABABAB"/></svg>
<div style="left:1514px;top:1300px;width:61px;height:38px;background:#0052CC;border-radius:3px"></div>
<div class="t" style="left:1528.00px;top:1313.00px;font-size:17.5px;line-height:17.5px;color:#FFFFFF;font-weight:700;letter-spacing:-0.819px;">Add</div>
<div style="left:516px;top:1347px;width:1114px;height:2px;background:#C1C7D0;"></div>
<div class="t" style="left:516.00px;top:1363.00px;font-size:13.5px;line-height:13.5px;color:#6B778C;letter-spacing:0.004px;">Footers can only be linked to numerical fields, such as &quot;Story Points&quot;.</div>
<div style="left:322px;top:1387px;width:1321px;height:1px;background:#CCCCCC;"></div>
<div style="left:1513px;top:1401px;width:64px;height:37px;background:#0052CC;border-radius:3px"></div>
<div class="t" style="left:1526.80px;top:1413.00px;font-size:17.4px;line-height:17.4px;color:#FFFFFF;font-weight:700;letter-spacing:-1.376px;">Save</div>
<div class="t" style="left:1591.60px;top:1414.00px;font-size:16.7px;line-height:16.7px;color:#0052CC;letter-spacing:-0.516px;">Cancel</div>
</body></html>
